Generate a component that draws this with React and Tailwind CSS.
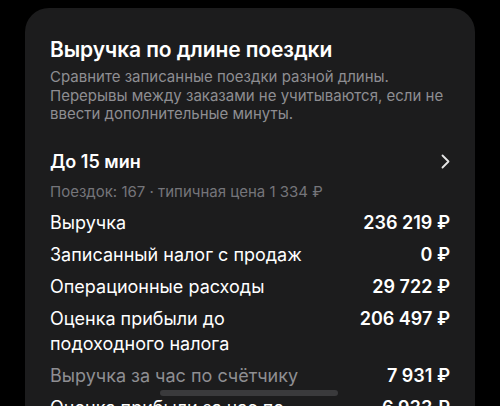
import React from "react";

const rows = [
  { label: "Выручка", value: "236 219 ₽" },
  { label: "Записанный налог с продаж", value: "0 ₽" },
  { label: "Операционные расходы", value: "29 722 ₽" },
  { label: "Оценка прибыли до подоходного налога", value: "206 497 ₽" },
  { label: "Выручка за час по счётчику", value: "7 931 ₽", muted: true },
  { label: "Оценка прибыли за час по подоходного налога", value: "6 933 ₽" },
];

const App = () => {
  return (
    <div
      className="w-[500px] h-[406px] bg-black overflow-hidden pt-2 px-[25px]"
      style={{ fontFamily: "Inter, 'Noto Sans', sans-serif" }}
    >
      <div className="relative bg-[#1c1c1d] rounded-t-[24px] h-[420px] px-[25px] pt-[27px]">
        {/* Header */}
        <h1 className="text-[21px] leading-[30px] font-semibold text-white tracking-[-0.1px]">
          Выручка по длине поездки
        </h1>
        <p className="mt-[3px] text-[15px] leading-[18.5px] text-[#8e8e92]">
          Сравните записанные поездки разной длины. Перерывы между заказами не
          учитываются, если не ввести дополнительные минуты.
        </p>

        {/* Group */}
        <div className="mt-[25px] flex items-center justify-between">
          <h2 className="text-[18px] leading-[26px] font-semibold text-white">До 15 мин</h2>
          <svg width="9" height="15" viewBox="0 0 9 15">
            <path d="M1.5 1.5 L7.5 7.5 L1.5 13.5" fill="none" stroke="#e5e5e5" strokeWidth="1.8" strokeLinecap="round" strokeLinejoin="round" />
          </svg>
        </div>
        <p className="mt-[7px] text-[15px] leading-[20px] text-[#75757a]">
          Поездок: 167 · типичная цена 1 334 ₽
        </p>

        <div className="mt-[8px] flex flex-col gap-[7px]">
          {rows.map(r => (
            <div key={r.label} className="flex justify-between gap-4 text-[18px] leading-[25px]">
              <span className={`${r.muted ? "text-[#8e8e92]" : "text-white"} max-w-[290px]`}>{r.label}</span>
              <span className="text-white font-semibold whitespace-nowrap">{r.value}</span>
            </div>
          ))}
        </div>

        {/* scroll indicator */}
        <div className="absolute left-[135px] top-[382px] w-[178px] h-[6px] rounded-full bg-[#3a3a3c]" />
      </div>
    </div>
  );
};

export default App;
